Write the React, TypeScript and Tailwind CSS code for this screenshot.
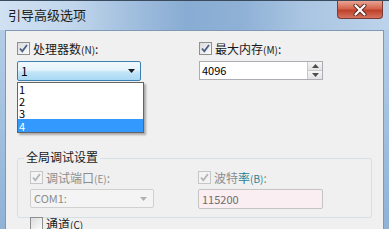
import React from 'react';

const FONT = '"Microsoft YaHei", "Noto Sans CJK SC", "Liberation Sans", sans-serif';

function CheckBox({ checked, disabled }: { checked?: boolean; disabled?: boolean }) {
  return (
    <div
      className={`flex h-[13px] w-[13px] shrink-0 items-center justify-center border ${
        disabled ? 'border-[#c6c6c6] bg-[#f4f4f4]' : 'border-[#8e8f8f] bg-gradient-to-br from-[#dcdcdc] to-[#fbfbfb]'
      }`}
    >
      {checked && (
        <svg width="11" height="11" viewBox="0 0 11 11">
          <path
            d="M2 5.5 L4.3 8.3 L9 2"
            fill="none"
            stroke={disabled ? '#b4b4b4' : '#4a5f86'}
            strokeWidth="1.8"
          />
        </svg>
      )}
    </div>
  );
}

function Label({ text, hot, disabled }: { text: string; hot: string; disabled?: boolean }) {
  return (
    <span className={`text-[12px] leading-none ${disabled ? 'text-[#8d8d8d]' : 'text-[#1a1a1a]'}`}>
      {text}
      <span className="text-[10px]">({hot})</span>:
    </span>
  );
}

function Arrow({ color }: { color: string }) {
  return (
    <svg width="7" height="4" viewBox="0 0 7 4">
      <path d="M0 0 L7 0 L3.5 4 Z" fill={color} />
    </svg>
  );
}

export default function App() {
  return (
    <div
      className="h-[229px] w-[389px] overflow-hidden bg-gradient-to-b from-[#b9d1ea] to-[#8fb2d6]"
      style={{ fontFamily: FONT }}
    >
      <div className="flex h-[30px] items-start border-t border-[#3b4b5e] bg-[linear-gradient(90deg,#d0e1f2_0%,#c2d7ec_18%,#a3c0df_33%,#88acd3_48%,#8fb1d6_62%,#a9c5e2_78%,#bdd3ea_100%)]">
        <div className="pl-[8px] pt-[7px] text-[13px] leading-none text-[#1c1c1c]">引导高级选项</div>
        <div className="ml-auto mr-[6px] flex h-[18px] w-[46px] items-center justify-center rounded-b-[4px] border border-t-0 border-[#7a3c36] bg-[linear-gradient(180deg,#e8a493_0%,#d4644c_45%,#c0412a_55%,#d4735f_100%)]">
          <svg width="14" height="12" viewBox="0 0 14 12">
            <path d="M2.5 1.5 L11.5 10.5 M11.5 1.5 L2.5 10.5" stroke="#5a2a24" strokeWidth="4" strokeLinecap="round" />
            <path d="M2.5 1.5 L11.5 10.5 M11.5 1.5 L2.5 10.5" stroke="#ffffff" strokeWidth="2.2" strokeLinecap="round" />
          </svg>
        </div>
      </div>

      <div className="relative mx-[5px] h-[199px] border-l border-t border-r border-[#7e98b6] bg-[#f0f0f0]">
        <div className="flex pt-[11px]">
          <div className="w-[193px] pl-[11px]">
            <div className="flex items-center gap-[3px]">
              <CheckBox checked />
              <Label text="处理器数" hot="N" />
            </div>
            <div className="mt-[6px] flex h-[20px] w-[124px] items-center justify-between rounded-[2px] border border-[#3c7fb1] bg-[linear-gradient(180deg,#f2f9fd_0%,#e4f3fc_45%,#c3e5f8_55%,#a9d8f4_100%)] pl-[3px] pr-[5px]">
              <span className="text-[12px] leading-none text-black">1</span>
              <Arrow color="#1a1a1a" />
            </div>
          </div>
          <div className="w-[180px]">
            <div className="flex items-center gap-[3px]">
              <CheckBox checked />
              <Label text="最大内存" hot="M" />
            </div>
            <div className="mt-[6px] flex h-[19px] w-[124px] border border-[#abadb3] bg-white">
              <span className="flex-1 pl-[2px] pt-[3px] text-[11px] leading-none text-black">4096</span>
              <div className="flex w-[15px] flex-col border-l border-[#c9c9c9]">
                <div className="flex flex-1 items-center justify-center border-b border-[#c9c9c9] bg-gradient-to-b from-[#f6f6f6] to-[#e3e3e3]">
                  <svg width="7" height="4" viewBox="0 0 7 4"><path d="M0 4 L7 4 L3.5 0 Z" fill="#4d4d4d" /></svg>
                </div>
                <div className="flex flex-1 items-center justify-center bg-gradient-to-b from-[#f6f6f6] to-[#e3e3e3]">
                  <Arrow color="#4d4d4d" />
                </div>
              </div>
            </div>
          </div>
        </div>

        <div className="absolute left-[11px] top-[51px] w-[127px] border border-[#646464] bg-white text-[11px] leading-[12px] text-black shadow-[2px_2px_2px_rgba(0,0,0,0.3)]">
          <div className="h-[12px] pl-[1px]">1</div>
          <div className="h-[12px] pl-[1px]">2</div>
          <div className="h-[12px] pl-[1px]">3</div>
          <div className="h-[13px] bg-[#3399ff] pl-[1px] pt-[1px] text-white">4</div>
        </div>

        <div className="relative ml-[11px] mr-[11px] mt-[77px] h-[60px] rounded-[3px] border border-[#d5dfe5]">
          <div className="absolute -top-[8px] left-[6px] bg-[#f0f0f0] px-[2px] text-[12px] leading-none text-[#1a1a1a]">
            全局调试设置
          </div>
          <div className="flex pt-[12px]">
            <div className="w-[180px] pl-[12px]">
              <div className="flex items-center gap-[3px]">
                <CheckBox checked disabled />
                <Label text="调试端口" hot="E" disabled />
              </div>
              <div className="mt-[5px] flex h-[19px] w-[124px] items-center justify-between rounded-[2px] border border-[#d0d0d0] bg-[#f4f4f4] pl-[3px] pr-[6px]">
                <span className="text-[11px] leading-none text-[#8d8d8d]">COM1:</span>
                <Arrow color="#b0b0b0" />
              </div>
              <div className="mt-[9px] flex items-center gap-[3px]">
                <CheckBox />
                <span className="text-[12px] leading-none text-[#1a1a1a]">
                  通道<span className="text-[10px]">(C)</span>
                </span>
              </div>
            </div>
            <div>
              <div className="flex items-center gap-[3px]">
                <CheckBox checked disabled />
                <span className="text-[12px] leading-none text-[#8d8d8d]">
                  波特<span className="text-[#2c7f93]">率</span>
                  <span className="text-[10px] text-[#2c7f93]">(B)</span>:
                </span>
              </div>
              <div className="mt-[5px] flex h-[20px] w-[125px] items-center rounded-[2px] border border-[#c4c4c4] bg-[#fbeef2] pl-[3px]">
                <span className="text-[11px] leading-none text-[#6d6d6d]">115200</span>
              </div>
            </div>
          </div>
        </div>
      </div>
    </div>
  );
}
